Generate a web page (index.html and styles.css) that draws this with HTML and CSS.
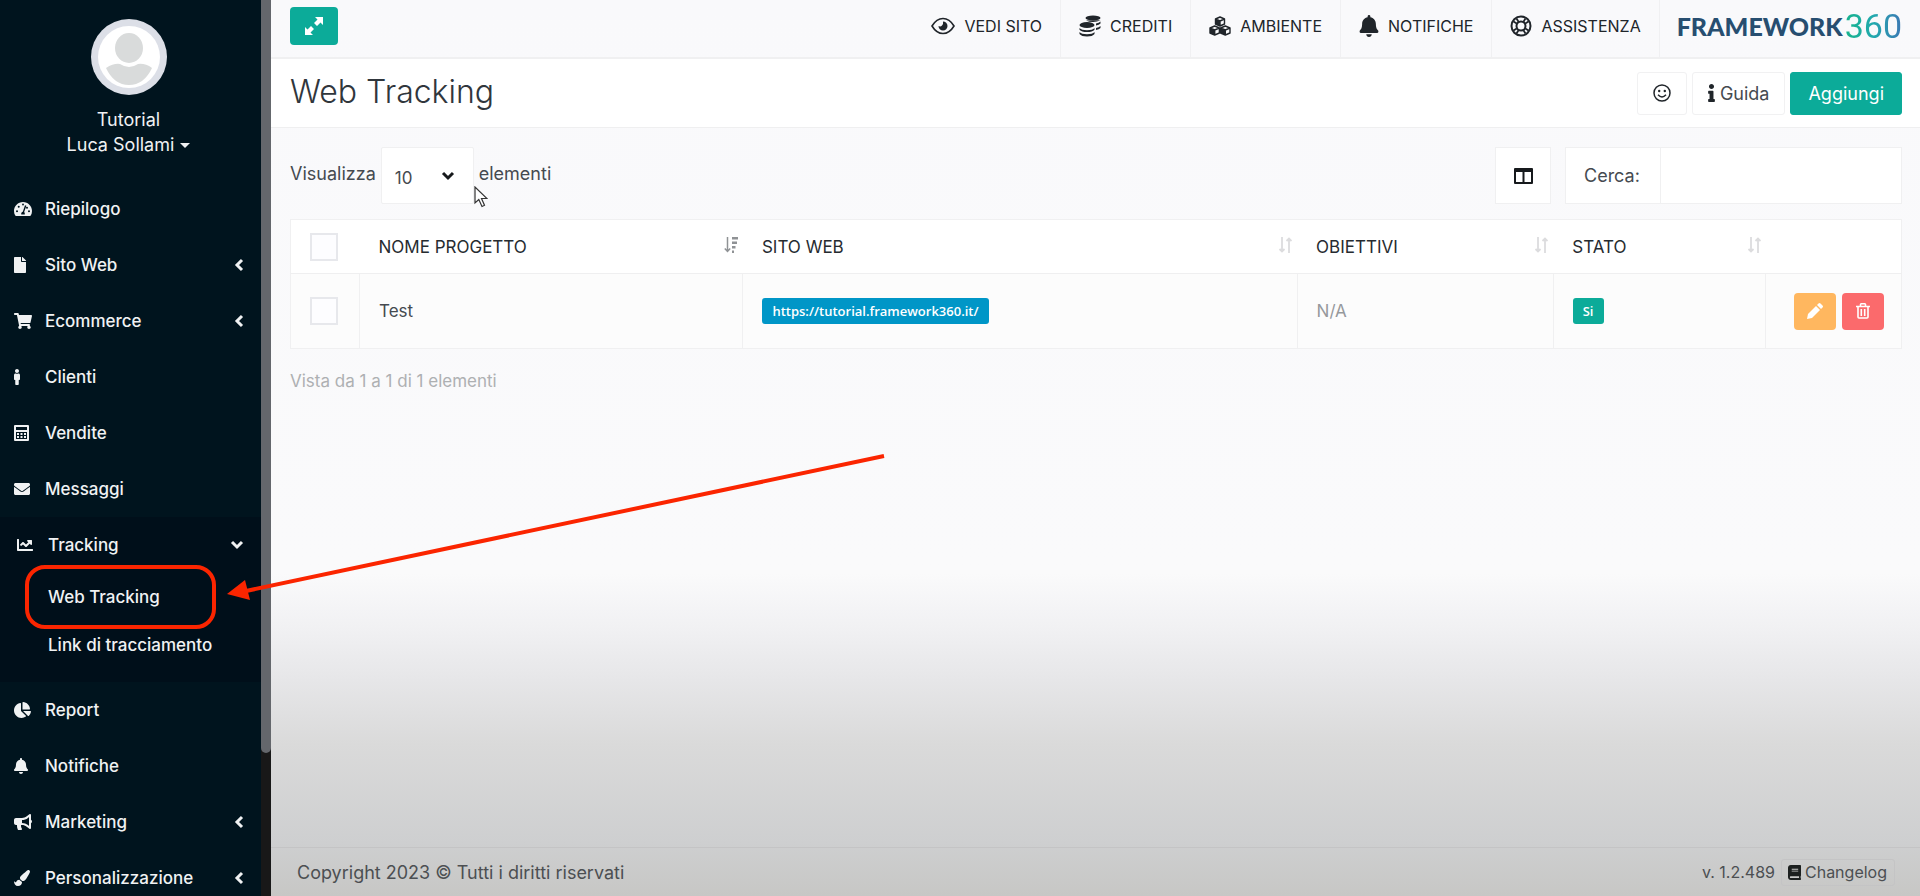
FILE: index.html
```html
<!DOCTYPE html>
<html lang="it">
<head>
  <meta charset="UTF-8">
  <title>Web Tracking - Framework360</title>
  <meta name="viewport" content="width=device-width, initial-scale=1.0">
  <link rel="stylesheet" href="styles.css">
</head>
<body>

<svg class="sprite" aria-hidden="true">
  <symbol id="chev-left" viewBox="0 0 10 14"><path d="M8 2L3 7l5 5" fill="none" stroke="currentColor" stroke-width="3"/></symbol>
  <symbol id="chev-down" viewBox="0 0 14 10"><path d="M2 2l5 5 5-5" fill="none" stroke="currentColor" stroke-width="3"/></symbol>
  <symbol id="bell" viewBox="0 0 448 512"><path d="M224 512c35.32 0 63.97-28.65 63.97-64H160.03c0 35.35 28.65 64 63.97 64zm215.39-149.71c-19.32-20.76-55.47-51.99-55.47-154.29 0-77.7-54.48-139.9-127.94-155.16V32c0-17.67-14.32-32-31.98-32s-31.98 14.33-31.98 32v20.84C118.56 68.1 64.08 130.3 64.08 208c0 102.3-36.15 133.53-55.47 154.29-6 6.45-8.66 14.16-8.61 21.71.11 16.4 12.98 32 32.1 32h383.8c19.12 0 32-15.6 32.1-32 .05-7.55-2.61-15.27-8.61-21.71z"/></symbol>
  <symbol id="sort" viewBox="0 0 14 16"><path d="M4 0v14M1.500 12l2.500 2.500L6.500 12M11 16V2M8.500 4L11 1.500 13.500 4" fill="none" stroke="currentColor" stroke-width="1.800"/></symbol>
</svg>

<div class="app">
  <aside class="sidebar">
    <div class="sidebar-inner">
      <div class="profile">
        <svg class="avatar" viewBox="0 0 76 76">
          <circle cx="38" cy="38" r="38" fill="#dcdfe7"/>
          <circle cx="38" cy="38" r="31" fill="#fff"/>
          <ellipse cx="38" cy="29" rx="14" ry="15" fill="#d9dbdb"/>
          <path d="M15 49q8-5 14-4 9 6 18 0 7-1 14 4-8 17-23 17T15 49z" fill="#d9dbdb"/>
        </svg>
        <span>Tutorial</span>
        <a href="#">Luca Sollami <i class="caret"></i></a>
      </div>

      <nav class="menu">
        <a class="item" href="#">
          <svg class="icon" viewBox="0 0 576 512"><path fill-rule="evenodd" d="M288 32C129 32 0 161 0 320c0 53 14 102 39 145 6 10 16 15 28 15h442c12 0 22-5 28-15 25-43 39-92 39-145C576 161 447 32 288 32zm0 50a30 30 0 1 1 0 60 30 30 0 0 1 0-60zM96 360a32 32 0 1 1 0-64 32 32 0 0 1 0 64zm55-145a32 32 0 1 1 0-64 32 32 0 0 1 0 64zm245-66l-72 204c17 15 26 38 20 79H232c-8-52 12-81 50-91l70-205zm20 96a32 32 0 1 1 32-32 32 32 0 0 1-32 32zm64 115a32 32 0 1 1 0-64 32 32 0 0 1 0 64z"/></svg>
          <span>Riepilogo</span>
        </a>
        <a class="item" href="#">
          <svg class="icon" viewBox="0 0 384 512"><path d="M224 136V0H24C10.700 0 0 10.700 0 24v464c0 13.300 10.700 24 24 24h336c13.300 0 24-10.700 24-24V160H248c-13.200 0-24-10.800-24-24zm160-14.100v6.100H256V0h6.100c6.400 0 12.500 2.500 17 7l97.900 98c4.500 4.500 7 10.600 7 16.900z"/></svg>
          <span>Sito Web</span>
          <svg class="arrow"><use href="#chev-left"/></svg>
        </a>
        <a class="item" href="#">
          <svg class="icon" viewBox="0 0 576 512"><path d="M528.12 301.319l47.273-208C578.806 78.301 567.391 64 551.99 64H159.208l-9.166-44.81C147.758 8.021 137.93 0 126.529 0H24C10.745 0 0 10.745 0 24v16c0 13.255 10.745 24 24 24h69.883l70.248 343.435C147.325 417.1 136 435.222 136 456c0 30.928 25.072 56 56 56s56-25.072 56-56c0-15.674-6.447-29.835-16.824-40h209.647C430.447 426.165 424 440.326 424 456c0 30.928 25.072 56 56 56s56-25.072 56-56c0-22.172-12.888-41.332-31.579-50.405l5.517-24.276c3.413-15.018-8.002-29.319-23.403-29.319H218.117l-6.545-32h293.145c11.206 0 20.92-7.754 23.403-18.681z"/></svg>
          <span>Ecommerce</span>
          <svg class="arrow"><use href="#chev-left"/></svg>
        </a>
        <a class="item" href="#">
          <svg class="icon" viewBox="0 0 192 512"><path d="M96 0c35.346 0 64 28.654 64 64s-28.654 64-64 64-64-28.654-64-64S60.654 0 96 0m48 144h-11.36c-22.711 10.443-49.59 10.894-73.28 0H48c-26.51 0-48 21.490-48 48v136c0 13.255 10.745 24 24 24h16v136c0 13.255 10.745 24 24 24h64c13.255 0 24-10.745 24-24V352h16c13.255 0 24-10.745 24-24V192c0-26.510-21.490-48-48-48z"/></svg>
          <span>Clienti</span>
        </a>
        <a class="item" href="#">
          <svg class="icon" viewBox="0 0 15 16"><path fill-rule="evenodd" d="M1 0h13q1 0 1 1v14q0 1-1 1H1q-1 0-1-1V1q0-1 1-1zm1 2v3h11V2zm0 5v7h11V7zm1 1h2v2H3zm3.500 0h2v2h-2zM10 8h2v2h-2zm-7 3h2v2H3zm3.500 0h2v2h-2zm3.500 0h2v2h-2z"/></svg>
          <span>Vendite</span>
        </a>
        <a class="item" href="#">
          <svg class="icon" viewBox="0 0 512 512"><path d="M502.300 190.800c3.900-3.100 9.700-.2 9.700 4.700V400c0 26.500-21.500 48-48 48H48c-26.500 0-48-21.500-48-48V195.600c0-5 5.700-7.800 9.700-4.700 22.400 17.400 52.100 39.500 154.100 113.600 21.100 15.400 56.700 47.800 92.200 47.600 35.700.3 72-32.800 92.300-47.600 102-74.100 131.600-96.300 154-113.700zM256 320c23.200.4 56.600-29.200 73.400-41.400 132.700-96.300 142.800-104.700 173.400-128.700 5.800-4.500 9.200-11.500 9.200-18.900v-19c0-26.500-21.500-48-48-48H48c-26.500 0-48 21.500-48 48v19c0 7.400 3.400 14.300 9.200 18.900 30.600 23.900 40.700 32.400 173.400 128.700 16.800 12.200 50.200 41.800 73.400 41.400z"/></svg>
          <span>Messaggi</span>
        </a>
        <div class="group">
          <a class="item" href="#">
            <svg class="icon" viewBox="0 0 512 512"><path d="M496 384H64V80c0-8.840-7.160-16-16-16H16C7.160 64 0 71.160 0 80v336c0 17.670 14.330 32 32 32h464c8.840 0 16-7.160 16-16v-32c0-8.840-7.160-16-16-16zM464 96H345.940c-21.380 0-32.090 25.850-16.970 40.970l32.400 32.400L288 242.750l-73.370-73.370c-12.500-12.500-32.760-12.500-45.250 0l-68.690 68.690c-6.250 6.250-6.250 16.380 0 22.630l22.620 22.620c6.250 6.250 16.380 6.250 22.630 0L192 237.250l73.370 73.370c12.500 12.500 32.760 12.500 45.250 0l96-96 32.400 32.400c15.120 15.120 40.970 4.410 40.970-16.970V112c.01-8.840-7.150-16-15.990-16z"/></svg>
            <span>Tracking</span>
            <svg class="arrow"><use href="#chev-down"/></svg>
          </a>
          <a class="subitem" href="#">Web Tracking</a>
          <a class="subitem" href="#">Link di tracciamento</a>
        </div>
        <a class="item" href="#">
          <svg class="icon" viewBox="0 0 544 512"><path d="M527.790 288H290.500l158.030 158.030c6.040 6.040 15.980 6.530 22.190.68 38.700-36.460 65.320-85.610 73.130-140.860 1.340-9.460-6.510-17.850-16.060-17.850zm-15.830-64.800C503.720 103.740 408.260 8.280 288.800.04 279.680-.59 272 7.100 272 16.240V240h223.770c9.140 0 16.820-7.680 16.190-16.800zM224 288V50.710c0-9.550-8.390-17.400-17.840-16.060C86.990 51.490-4.100 155.600.14 280.370 4.500 408.510 114.830 513.590 243.030 511.980c50.400-.63 96.970-16.870 135.260-44.030 7.900-5.600 8.420-17.230 1.570-24.080L224 288z"/></svg>
          <span>Report</span>
        </a>
        <a class="item" href="#">
          <svg class="icon" viewBox="0 0 448 512"><use href="#bell"/></svg>
          <span>Notifiche</span>
        </a>
        <a class="item" href="#">
          <svg class="icon" viewBox="0 0 576 512"><path d="M576 240c0-23.630-12.950-44.040-32-55.120V32.010C544 23.260 537.020 0 512 0c-7.120 0-14.190 2.380-19.980 7.020l-85.030 68.030C364.280 109.190 310.660 128 256 128H64c-35.350 0-64 28.650-64 64v96c0 35.350 28.650 64 64 64h33.700c-1.390 10.480-2.180 21.140-2.180 32 0 39.770 9.260 77.350 25.560 110.940 5.190 10.690 16.520 17.060 28.400 17.060h74.280c26.050 0 41.690-29.840 25.900-50.560-16.400-21.520-26.150-48.360-26.150-77.440 0-11.110 1.620-21.790 4.410-32H256c54.660 0 108.280 18.810 150.980 52.950l85.030 68.030a32.023 32.023 0 0 0 19.980 7.020c24.920 0 32-22.780 32-32V295.130C563.050 284.040 576 263.630 576 240zm-96 141.420l-33.050-26.440C392.950 311.780 325.120 288 256 288v-96c69.120 0 136.950-23.780 190.950-66.980L480 98.580v282.840z"/></svg>
          <span>Marketing</span>
          <svg class="arrow"><use href="#chev-left"/></svg>
        </a>
        <a class="item" href="#">
          <svg class="icon" viewBox="0 0 512 512"><path d="M167.020 309.340c-40.120 2.580-76.530 17.860-97.190 72.300-2.350 6.210-8 9.980-14.590 9.980-11.110 0-45.460-27.670-55.250-34.350C0 439.620 37.930 512 128 512c75.860 0 128-43.770 128-120.190 0-3.110-.65-6.080-.97-9.130l-88.010-73.340zM457.890 0c-15.160 0-29.370 6.710-40.210 16.450C213.270 199.050 192 203.340 192 257.090c0 13.700 3.250 26.760 8.730 38.700l63.820 53.180c7.210 1.800 14.640 3.030 22.390 3.030 62.110 0 98.110-45.470 211.160-256.460 7.380-14.350 13.900-29.850 13.900-45.990C512 20.640 486 0 457.890 0z"/></svg>
          <span>Personalizzazione</span>
          <svg class="arrow"><use href="#chev-left"/></svg>
        </a>
      </nav>
    </div>
    <div class="scrollbar"><div class="thumb"></div></div>
  </aside>

  <div class="page">
    <header class="topbar">
      <button class="btn-expand" type="button" aria-label="Espandi">
        <svg width="18" height="18" viewBox="0 0 18 18"><path d="M10 0h8v8l-2.500-2.500L12 9 9 6l3.500-3.500zM8 18H0v-8l2.500 2.500L6 9l3 3-3.500 3.500z" fill="#fff"/></svg>
      </button>
      <nav class="topnav">
        <a href="#">
          <svg width="24" height="18" viewBox="0 0 24 18"><path d="M1 9q4.500-7.500 11-7.500T23 9q-4.500 7.500-11 7.500T1 9z" fill="none" stroke="currentColor" stroke-width="1.600"/><path d="M12 4.500A4.500 4.500 0 1 1 7.500 9q2 1 3.500-.5t1-4z"/></svg>
          VEDI SITO
        </a>
        <a href="#">
          <svg width="22" height="22" viewBox="0 0 22 22"><ellipse cx="14" cy="3" rx="7.500" ry="2.600"/><ellipse cx="8" cy="10" rx="7.500" ry="3"/><path d="M.5 13q2 2.200 7.500 2.200T15.500 13v1.700q-2 2.300-7.500 2.300T.5 14.700zM.5 17q2 2.200 7.500 2.200T15.500 17v2q-2 2.500-7.500 2.500T.5 19zM17 8.500q3-.5 4.500-2v2Q20 10 17 10.500zM17 13q3-.5 4.500-2v2q-1.500 1.500-4.500 2zM7 5.500q3 1.500 7 1.500t7.500-1.800"/></svg>
          CREDITI
        </a>
        <a href="#">
          <svg width="22" height="20" viewBox="0 0 22 20"><g fill="none" stroke="currentColor" stroke-width="1.400" stroke-linejoin="round"><path d="M11 1l4.500 2v5L11 10 6.500 8V3zM6.500 3L11 5l4.500-2M11 5v5"/><path d="M5.700 10l4.700 2v5l-4.700 2L1 17v-5zM1 12l4.700 2 4.700-2M5.700 14v5"/><path d="M16.300 10l4.700 2v5l-4.700 2-4.700-2v-5zM11.600 12l4.700 2 4.700-2M16.300 14v5"/></g><path d="M6.500 3L11 5v5L6.500 8zM1 12l4.700 2v5L1 17zM11.600 12l4.700 2v5l-4.700-2z"/></svg>
          AMBIENTE
        </a>
        <a href="#">
          <svg width="20" height="22" viewBox="0 0 448 512"><use href="#bell"/></svg>
          NOTIFICHE
        </a>
        <a href="#">
          <svg width="22" height="22" viewBox="0 0 22 22"><g fill="none" stroke="currentColor"><circle cx="11" cy="11" r="9.500" stroke-width="2"/><circle cx="11" cy="11" r="4.500" stroke-width="2"/><path d="M3.500 6.500l4 2.500M6.500 3.500L9 7.500M15.500 3.500L13 7.500M18.500 6.500l-4 2.500M3.500 15.500l4-2.500M6.500 18.500l2.500-4M15.500 18.500l-2.500-4M18.500 15.500l-4-2.500" stroke-width="1.800"/></g></svg>
          ASSISTENZA
        </a>
      </nav>
      <a class="logo" href="#"><b>FRAMEWORK</b><span>360</span></a>
    </header>

    <div class="titlebar">
      <h1>Web Tracking</h1>
      <div class="actions">
        <button class="btn" type="button" aria-label="Feedback">
          <svg width="18" height="18" viewBox="0 0 18 18"><circle cx="9" cy="9" r="8" fill="none" stroke="currentColor" stroke-width="1.500"/><circle cx="6.200" cy="7" r="1.200"/><circle cx="11.800" cy="7" r="1.200"/><path d="M5 10.800q4 4.200 8 0" fill="none" stroke="currentColor" stroke-width="1.500"/></svg>
        </button>
        <button class="btn" type="button">
          <svg width="7" height="18" viewBox="0 0 192 512"><path d="M20 424.229h20V279.771H20c-11.046 0-20-8.954-20-20V212c0-11.046 8.954-20 20-20h112c11.046 0 20 8.954 20 20v212.229h20c11.046 0 20 8.954 20 20V492c0 11.046-8.954 20-20 20H20c-11.046 0-20-8.954-20-20v-47.771c0-11.046 8.954-20 20-20zM96 0C56.235 0 24 32.235 24 72s32.235 72 72 72 72-32.235 72-72S135.764 0 96 0z"/></svg>
          Guida
        </button>
        <button class="btn btn-primary" type="button">Aggiungi</button>
      </div>
    </div>

    <main class="content">
      <div class="toolbar">
        <div class="length">
          <label for="length">Visualizza</label>
          <span class="select-box">
            <select id="length">
              <option>10</option>
              <option>25</option>
              <option>50</option>
            </select>
            <svg class="select-arrow" width="14" height="10"><use href="#chev-down"/></svg>
          </span>
          <span class="length-unit">elementi</span>
          <svg class="cursor" width="14" height="22" viewBox="0 0 14 22"><path d="M1 1v16l3.800-3.500L8 20.500l2.500-1.200-3-6.800H13z" fill="#fff" stroke="#333" stroke-width="1.200"/></svg>
        </div>
        <div class="filters">
          <button class="btn-columns" type="button" aria-label="Colonne">
            <svg width="19" height="16" viewBox="0 0 19 16"><path fill-rule="evenodd" d="M1 0h17q1 0 1 1v14q0 1-1 1H1q-1 0-1-1V1q0-1 1-1zm1 4v10h6.500V4zm8.500 0v10H17V4z"/></svg>
          </button>
          <div class="search">
            <label for="search">Cerca:</label>
            <input id="search" type="text">
          </div>
        </div>
      </div>

      <table>
        <colgroup>
          <col class="c-check"><col class="c-name"><col class="c-site"><col class="c-goals"><col class="c-state"><col>
        </colgroup>
        <thead>
          <tr>
            <th><input type="checkbox" aria-label="Seleziona tutti"></th>
            <th><div class="th">NOME PROGETTO
              <svg class="sort active" viewBox="0 0 14 16"><path d="M3.500 0v14M.8 11.500l2.700 3 2.700-3" fill="none" stroke="currentColor" stroke-width="1.500"/><path d="M8 0h6v2.500H8zM8 4.500h5V7H8zM8 9h3.500v2.500H8zM8 13.500h2V16H8z"/></svg></div></th>
            <th><div class="th">SITO WEB <svg class="sort"><use href="#sort"/></svg></div></th>
            <th><div class="th">OBIETTIVI <svg class="sort"><use href="#sort"/></svg></div></th>
            <th><div class="th">STATO <svg class="sort"><use href="#sort"/></svg></div></th>
            <th></th>
          </tr>
        </thead>
        <tbody>
          <tr>
            <td><input type="checkbox" aria-label="Seleziona Test"></td>
            <td>Test</td>
            <td><a class="badge badge-info" href="#">https://tutorial.framework360.it/</a></td>
            <td class="muted">N/A</td>
            <td><span class="badge badge-ok">Si</span></td>
            <td>
              <div class="row-actions">
                <button class="edit" type="button" aria-label="Modifica">
                  <svg width="16" height="16" viewBox="0 0 16 16"><path d="M9 3l4 4-8 8-5 1 1-5zM10 2l1.500-1.500q1-1 2 0l2 2q1 1 0 2L14 6z" fill="#fff"/></svg>
                </button>
                <button class="delete" type="button" aria-label="Elimina">
                  <svg width="14" height="16" viewBox="0 0 14 16"><path d="M0 3.500h14M4.500 3.500v-2q0-.7.700-.7h3.600q.7 0 .7.700v2M2 3.500v10.500q0 1 1 1h8q1 0 1-1V3.500M5.300 6v7M8.700 6v7" fill="none" stroke="#fff" stroke-width="1.600"/></svg>
                </button>
              </div>
            </td>
          </tr>
        </tbody>
      </table>

      <p class="table-info">Vista da 1 a 1 di 1 elementi</p>
    </main>

    <footer class="footer">
      <span>Copyright 2023 © Tutti i diritti riservati</span>
      <div class="version">
        <span>v. 1.2.489</span>
        <a href="#">
          <svg width="13" height="15" viewBox="0 0 448 512"><path d="M448 360V24c0-13.300-10.700-24-24-24H96C43 0 0 43 0 96v320c0 53 43 96 96 96h328c13.300 0 24-10.700 24-24v-16c0-7.500-3.500-14.300-8.900-18.700-4.200-15.400-4.200-59.300 0-74.700 5.400-4.300 8.900-11.100 8.900-18.600zM128 134c0-3.300 2.700-6 6-6h212c3.300 0 6 2.700 6 6v20c0 3.300-2.700 6-6 6H134c-3.300 0-6-2.700-6-6v-20zm0 64c0-3.300 2.700-6 6-6h212c3.300 0 6 2.700 6 6v20c0 3.300-2.700 6-6 6H134c-3.300 0-6-2.700-6-6v-20zm253.400 250H96c-17.700 0-32-14.300-32-32 0-17.600 14.400-32 32-32h285.400c-1.900 17.100-1.900 46.900 0 64z"/></svg>
          Changelog
        </a>
      </div>
    </footer>
  </div>
</div>

<!-- tutorial annotation drawn over the page -->
<svg class="annotation" width="900" height="640" aria-hidden="true">
  <rect x="27" y="567" width="187" height="60" rx="18" fill="none" stroke="#fb2500" stroke-width="4"/>
  <path d="M884 456L246 591" stroke="#fb2500" stroke-width="4"/>
  <path d="M227 594l18-14 5 20z" fill="#fb2500"/>
</svg>

</body>
</html>
```
FILE: styles.css
```css
* { box-sizing: border-box; }
body {
  margin: 0;
  font-family: Inter, "Open Sans", sans-serif;
  font-size: 16px;
  color: #454a50;
}
a { color: inherit; text-decoration: none; }
button, input, select { font: inherit; color: inherit; }
svg { fill: currentColor; flex-shrink: 0; }
.sprite { position: absolute; width: 0; height: 0; }
.app { display: flex; height: 100vh; }

/* sidebar */
.sidebar {
  display: flex;
  width: 271px;
  flex-shrink: 0;
  background: #00141e;
  color: #f0f2f3;
}
.sidebar-inner { flex: 1; overflow: hidden; }
.profile {
  display: flex;
  flex-direction: column;
  align-items: center;
  height: 181px;
  padding: 19px 4px 0 0;
  font-size: 18px;
  line-height: 25px;
}
.avatar { width: 76px; height: 76px; margin-bottom: 12px; }
.caret {
  display: inline-block;
  border: 5px solid transparent;
  border-top-color: currentColor;
  border-bottom: 0;
  margin-left: 1px;
  vertical-align: 3px;
}
.menu { font-size: 17px; font-weight: 500; }
.item {
  display: grid;
  grid-template-columns: 31px 1fr auto;
  align-items: center;
  height: 56px;
  padding: 0 17px 0 14px;
}
.icon { height: 16px; max-width: 19px; }
.arrow { width: 10px; height: 14px; }
.group { background: #000f1a; padding-bottom: 13px; }
.group .item { padding-left: 17px; }
.group .arrow { width: 14px; height: 10px; }
.subitem { display: block; padding-left: 48px; line-height: 48px; }
.scrollbar { width: 10px; background: #181818; }
.thumb { height: 84%; background: #64676c; border-radius: 0 0 5px 5px; }

/* page */
.page {
  flex: 1;
  min-width: 0;
  display: flex;
  flex-direction: column;
  background: linear-gradient(#f9f9fb 0%, #fafafb 64%, #f1f1f3 70%, #e6e6e8 76%, #dadada 83%, #cecfd0 94%, #c7c7c5 100%);
}
.topbar {
  display: flex;
  align-items: center;
  height: 59px;
  padding: 0 18px 0 19px;
  border-bottom: 2px solid #f0f0f1;
}
.btn-expand {
  display: grid;
  place-items: center;
  width: 48px;
  height: 38px;
  margin-bottom: 5px;
  border: 0;
  border-radius: 4px;
  background: #0cab99;
}
.topnav {
  display: flex;
  align-self: stretch;
  margin-left: auto;
  color: #20252a;
}
.topnav a {
  display: flex;
  align-items: center;
  gap: 9px;
  padding: 0 18px 5px;
  border-right: 1px solid #f0f0f2;
}
.logo {
  display: flex;
  align-items: center;
  gap: 2px;
  height: 34px;
  margin: 0 0 6px 17px;
  color: #274e70;
}
.logo b { font: 900 25px Lato, sans-serif; }
.logo span {
  font: 400 34px Roboto, sans-serif;
  background: linear-gradient(90deg, #16b38c, #22a9ae 50%, #3c78b4);
  background-clip: text;
  -webkit-background-clip: text;
  color: transparent;
}
.titlebar {
  display: flex;
  align-items: center;
  justify-content: space-between;
  height: 69px;
  padding: 0 18px 0 19px;
  background: #fff;
  border-bottom: 1px solid #efeff0;
}
h1 { margin: 0; padding-bottom: 4px; font-size: 32px; font-weight: 300; color: #30363c; }
.actions { display: flex; gap: 5px; }
.btn {
  display: flex;
  align-items: center;
  gap: 5px;
  height: 43px;
  padding: 0 15px;
  border: 1px solid #f1f1f2;
  border-radius: 3px;
  background: #fff;
  font-size: 18px;
}
.btn svg { color: #20252a; }
.btn-primary { padding: 0 17px; background: #0cab99; border-color: #0cab99; color: #fff; }

.content { flex: 1; padding: 19px 18px 0 19px; }
.toolbar { display: flex; justify-content: space-between; margin-bottom: 15px; }
.length {
  position: relative;
  display: flex;
  align-items: center;
  gap: 5px;
  height: 57px;
  font-size: 18px;
}
.length label, .length-unit { padding-bottom: 4px; }
.select-box { position: relative; }
.select-box select {
  appearance: none;
  width: 93px;
  height: 57px;
  padding: 4px 13px 0;
  border: 1px solid #f0f0f1;
  border-radius: 2px;
  background: #fff;
  font-size: 17px;
}
.select-arrow { position: absolute; right: 19px; top: 24px; color: #16191c; }
.cursor { position: absolute; left: 184px; top: 39px; }
.filters { display: flex; gap: 14px; }
.btn-columns {
  display: grid;
  place-items: center;
  width: 56px;
  border: 1px solid #f0f0f1;
  background: #fff;
  color: #16191c;
}
.search {
  display: flex;
  width: 337px;
  border: 1px solid #f0f0f1;
  background: #fff;
  font-size: 18px;
}
.search label { width: 95px; padding-left: 18px; line-height: 55px; border-right: 1px solid #f0f0f1; }
.search input { flex: 1; min-width: 0; border: 0; background: none; padding: 0 12px; }

/* table */
table {
  width: 100%;
  table-layout: fixed;
  border-collapse: collapse;
  background: #fcfcfc;
  border: 1px solid #f0f0f1;
  font-size: 17px;
}
.c-check { width: 69px; }
.c-name { width: 23.8%; }
.c-site { width: 34.4%; }
.c-goals { width: 15.9%; }
.c-state { width: 13.2%; }
th {
  height: 54px;
  padding: 0 5px 0 19px;
  background: #fff;
  border-bottom: 1px solid #efeff0;
  font-weight: 400;
  text-align: left;
  color: #262b30;
}
td { height: 75px; padding: 0 19px; border-right: 1px solid #f0f0f1; }
td:last-child { padding-right: 17px; }
.th { display: flex; align-items: center; justify-content: space-between; }
.sort { width: 14px; height: 16px; margin-bottom: 4px; color: #dcdcde; }
.sort.active { color: #8f9295; }
table input {
  appearance: none;
  display: block;
  width: 28px;
  height: 28px;
  margin: 0;
  border: 2px solid #e7e8ec;
  background: #fdfdff;
}
.muted { color: #96999c; }
.badge {
  display: inline-block;
  padding: 0 10px;
  border-radius: 3px;
  font: 600 13px/26px "Open Sans", sans-serif;
  color: #fff;
}
.badge-info { background: #0096c7; }
.badge-ok { background: #0cab99; }
.row-actions { display: flex; justify-content: flex-end; gap: 6px; }
.row-actions button {
  display: grid;
  place-items: center;
  width: 42px;
  height: 37px;
  padding: 0;
  border: 0;
  border-radius: 4px;
}
.edit { background: #ffb75f; }
.delete { background: #fb6a6c; }
.table-info { margin: 20px 0 0; line-height: 24px; font-size: 17px; color: #aeb0b2; }

.footer {
  display: flex;
  align-items: center;
  justify-content: space-between;
  height: 49px;
  padding: 0 25px 0 26px;
  border-top: 1px solid #c4c4c5;
  font-size: 18px;
  color: #4c4f52;
}
.version { display: flex; align-items: center; gap: 6px; font-size: 16px; }
.version a {
  display: flex;
  align-items: center;
  gap: 4px;
  height: 27px;
  padding: 0 7px 0 6px;
  border: 1px solid #c4c4c5;
  border-radius: 3px;
}
.version svg { color: #1c201f; }

.annotation { position: absolute; left: 0; top: 0; pointer-events: none; }
```
